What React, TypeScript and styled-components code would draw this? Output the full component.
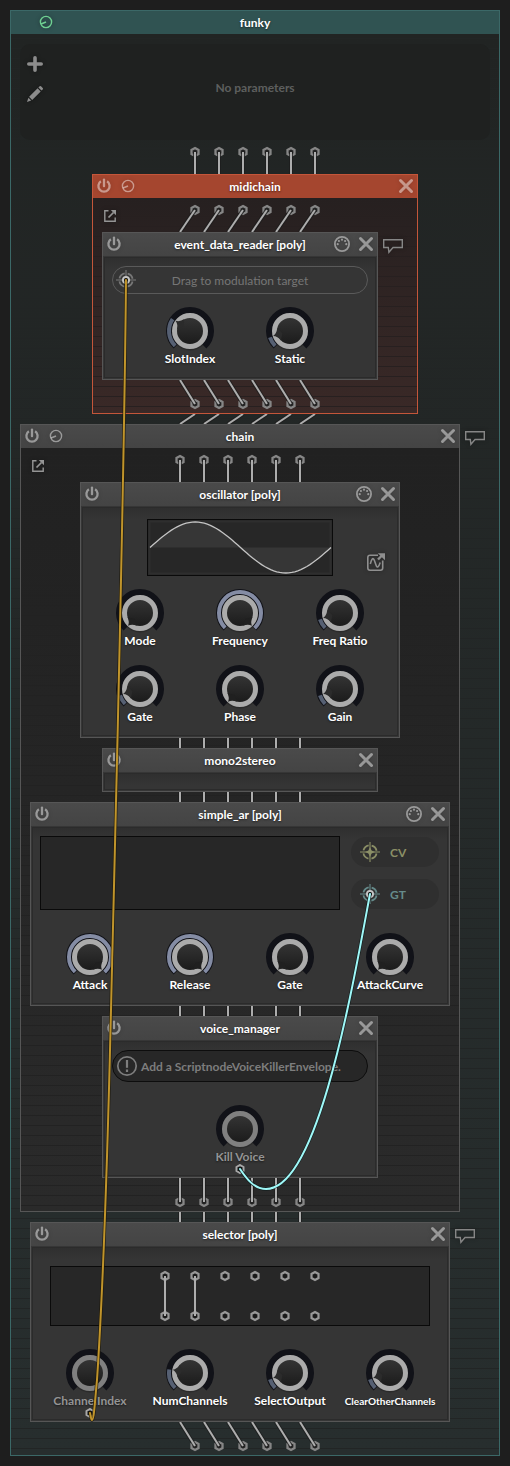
import React, { useId, useState } from "react";
import styled, { createGlobalStyle, css } from "styled-components";

const GlobalStyle = createGlobalStyle`
  *, *::before, *::after { box-sizing: border-box; }
  body {
    margin: 0;
    background: #1e1e1e;
    color: #fff;
    font: 700 12px/16px Lato, "Liberation Sans", sans-serif;
  }
  svg { display: block; flex: none; }
`;

/* ---------- themes ---------- */

type Tone = "root" | "midi" | "plain";

const tones: Record<Tone, { border: string; header: string; from: string; to: string; stripe: string; offset: number }> = {
  root: { border: "#3b6867", header: "#305352", from: "#212423", to: "#272e2e", stripe: "#222525", offset: 5 },
  midi: { border: "#c4563a", header: "#a5462f", from: "#262020", to: "#3a2927", stripe: "#272020", offset: 9 },
  plain: { border: "#565656", header: "linear-gradient(#4a4a4a, #444)", from: "#212121", to: "#2a2a2a", stripe: "#222222", offset: 8 },
};

/* ---------- layout parts ---------- */

const Page = styled.main`
  padding: 10px;
`;

const Frame = styled.section<{ $tone: Tone; $width?: number; $fill?: boolean }>`
  position: relative;
  border: 1px solid ${(p) => tones[p.$tone].border};
  width: ${(p) => (p.$fill ? "auto" : p.$width ? `${p.$width}px` : "fit-content")};
`;

const Header = styled.header<{ $tone: Tone }>`
  display: grid;
  grid-template-columns: 1fr auto 1fr;
  height: 23px;
  background: ${(p) => tones[p.$tone].header};
`;

const HeaderSide = styled.div<{ $end?: boolean }>`
  display: flex;
  gap: 2px;
  justify-content: ${(p) => (p.$end ? "flex-end" : "flex-start")};
`;

const Title = styled.h2`
  margin: 0;
  font-size: 12px;
  line-height: 24px;
  font-weight: 700;
  white-space: nowrap;
  text-shadow: 0 1px 2px rgba(0, 0, 0, 0.5);
`;

const IconButton = styled.button<{ $tint?: string }>`
  display: grid;
  place-items: center;
  width: 22px;
  height: 22px;
  padding: 0;
  border: 0;
  background: none;
  color: ${(p) => p.$tint ?? "rgba(255, 255, 255, 0.46)"};
  cursor: pointer;
  filter: drop-shadow(0 0 2px rgba(0, 0, 0, 0.35));
`;

const Slot = styled.span`
  width: 22px;
`;

const ContainerBody = styled.div<{ $tone: Tone }>`
  display: flex;
  flex-direction: column;
  align-items: center;
  padding: 0 9px;
  background:
    repeating-linear-gradient(
      transparent 0 ${(p) => tones[p.$tone].offset - 1}px,
      ${(p) => tones[p.$tone].stripe} ${(p) => tones[p.$tone].offset - 1}px ${(p) => tones[p.$tone].offset}px,
      transparent ${(p) => tones[p.$tone].offset}px 10px
    ),
    linear-gradient(${(p) => tones[p.$tone].from}, ${(p) => tones[p.$tone].to});
`;

const LeafBody = styled.div<{ $bare?: boolean }>`
  padding: ${(p) => (p.$bare ? "19px 0 0" : "10px 9px 12px")};
  background: linear-gradient(#2e2e2e, #353535 14px);
  box-shadow: inset 0 0 0 1px #363636, inset 0 0 0 2px #2b2b2b;
`;

const InletRow = styled.div`
  display: grid;
  grid-template-columns: 1fr auto 1fr;
  align-self: stretch;
`;

const InletTool = styled.div`
  padding: 7px 0 0;
  margin-left: -3px;
`;

const NodeRow = styled.div`
  display: flex;
  align-items: flex-start;
`;

const CommentSlot = styled.div`
  width: 30px;
  padding: 3px 0 0 4px;
`;

const ParameterPanel = styled.div`
  display: grid;
  grid-template-columns: 30px 1fr 30px;
  align-self: stretch;
  height: 96px;
  margin-top: 10px;
  border-radius: 10px;
  background: #1f2120;
`;

const PanelTools = styled.div`
  display: flex;
  flex-direction: column;
  align-items: center;
  gap: 8px;
  padding-top: 9px;
`;

const PanelHint = styled.p`
  margin: 0;
  padding-bottom: 8px;
  align-self: center;
  text-align: center;
  color: #5d5f5e;
`;

const Pill = styled.div<{ $dark?: boolean }>`
  display: grid;
  grid-template-columns: ${(p) => (p.$dark ? "28px 1fr 0" : "26px 1fr 26px")};
  align-items: center;
  height: ${(p) => (p.$dark ? 32 : 28)}px;
  border-radius: 16px;
  border: 1px solid ${(p) => (p.$dark ? "#0d0d0d" : "#5a5a5a")};
  background: ${(p) => (p.$dark ? "#272727" : "transparent")};
  color: ${(p) => (p.$dark ? "#7d7d7d" : "#767676")};
  font-weight: ${(p) => (p.$dark ? 700 : 400)};
  text-align: ${(p) => (p.$dark ? "left" : "center")};
  white-space: nowrap;
`;

const PillIcon = styled.span`
  display: grid;
  place-items: center;
  height: 26px;
`;

const Caption = styled.span`
  padding-top: 2px;
`;

const KnobRow = styled.div<{ $gap: number }>`
  display: flex;
  justify-content: center;
  margin-top: ${(p) => p.$gap}px;
`;

const KnobCell = styled.label<{ $off?: boolean; $small?: boolean }>`
  position: relative;
  display: flex;
  flex-direction: column;
  align-items: center;
  width: 100px;
  height: 60px;
  color: ${(p) => (p.$off ? "#949494" : "#fff")};
  font-size: ${(p) => (p.$small ? 10 : 12)}px;
`;

const KnobName = styled.span`
  margin: -4px 0 -1px;
  line-height: 16px;
  white-space: nowrap;
  text-shadow: 0 1px 2px rgba(0, 0, 0, 0.5);
`;

const KnobInput = styled.input`
  position: absolute;
  top: 0;
  left: 26px;
  width: 48px;
  height: 48px;
  margin: 0;
  opacity: 0;
  cursor: pointer;
`;

const Screen = styled.div<{ $height: number; $width?: number }>`
  display: grid;
  place-items: center;
  height: ${(p) => p.$height}px;
  ${(p) => p.$width && css`width: ${p.$width}px;`}
  border: 1px solid #0a0a0a;
  background: #272727;
`;

const OscillatorTop = styled.div`
  display: grid;
  grid-template-columns: 1fr auto 1fr;
  padding-top: 3px;
`;

const ScopeTool = styled.div`
  display: grid;
  place-items: end center;
  padding: 0 0 3px 28px;
`;

const EnvelopeTop = styled.div`
  display: grid;
  grid-template-columns: 1fr 88px;
  gap: 11px;
  padding-right: 1px;
`;

const Outputs = styled.div`
  display: flex;
  flex-direction: column;
  gap: 12px;
  padding-top: 1px;
`;

const Output = styled.div<{ $tint: string }>`
  display: flex;
  align-items: center;
  gap: 10px;
  height: 30px;
  padding-left: 9px;
  border-radius: 15px;
  background: #2f2f2f;
  color: ${(p) => p.$tint};
`;

const SelectorTop = styled.div`
  padding: 10px 10px 0;
`;

const CableLayer = styled.svg`
  position: absolute;
  top: -1px;
  left: 0;
  right: 0;
  margin: 0 auto;
  pointer-events: none;
`;

/* ---------- icons ---------- */

const PowerIcon = () => (
  <svg width="16" height="16" viewBox="-8 -8 16 16" fill="none" stroke="currentColor" strokeWidth="2.3">
    <path d="M-3.1 -4.7A5.6 5.6 0 1 0 3.1 -4.7" />
    <path d="M0 -6.4V0.2" strokeLinecap="round" />
  </svg>
);

const GaugeIcon = () => (
  <svg width="16" height="16" viewBox="-8 -8 16 16" fill="none" stroke="currentColor" strokeWidth="1.4">
    <circle r="5.6" />
    <path d="M-5 2L0 0" strokeWidth="1.8" />
  </svg>
);

const CloseIcon = () => (
  <svg width="16" height="16" viewBox="-8 -8 16 16" stroke="currentColor" strokeWidth="3" strokeLinecap="round">
    <path d="M-5.5 -5.5L5.5 5.5M5.5 -5.5L-5.5 5.5" />
  </svg>
);

const MidiIcon = () => (
  <svg width="18" height="18" viewBox="-9 -9 18 18" fill="currentColor">
    <circle r="7.1" fill="none" stroke="currentColor" strokeWidth="1.8" />
    <circle cx="-4.3" cy="0.2" r="1.1" />
    <circle cx="-3.1" cy="-3" r="1.1" />
    <circle cx="0" cy="-4.3" r="1.1" />
    <circle cx="3.1" cy="-3" r="1.1" />
    <circle cx="4.3" cy="0.2" r="1.1" />
  </svg>
);

const CommentIcon = () => (
  <svg width="22" height="17" viewBox="0 0 22 17" fill="none" stroke="currentColor" strokeWidth="1.4">
    <path d="M1.7 1.7H20.3V9.5H11L6.9 14.3L6.3 9.5H1.7Z" />
  </svg>
);

const OpenIcon = () => (
  <svg width="14" height="14" viewBox="0 0 14 14" fill="none" stroke="currentColor" strokeWidth="1.4">
    <path d="M5.5 1.8H1.8V12.2H12.2V8.5" />
    <path d="M5.5 8.5L10.5 3.5" strokeWidth="1.7" />
    <path d="M7.8 1H13V6.2Z" fill="currentColor" stroke="none" />
  </svg>
);

const PlusIcon = () => (
  <svg width="18" height="18" viewBox="-9 -9 18 18" stroke="currentColor" strokeWidth="3.6" strokeLinecap="round">
    <path d="M0 -6.2V6.2M-6.2 0H6.2" />
  </svg>
);

const PencilIcon = () => (
  <svg width="18" height="18" viewBox="0 0 18 18" fill="currentColor">
    <path d="M1 17L2.4 12.8L5.2 15.6Z" />
    <path d="M3.1 11.8L11.6 3.3L14.7 6.4L6.2 14.9Z" />
    <path d="M12.4 2.5L13.6 1.3Q14.3 0.7 15 1.3L16.7 3Q17.3 3.7 16.7 4.4L15.5 5.6Z" />
  </svg>
);

const ScopeIcon = () => (
  <svg width="20" height="20" viewBox="0 0 20 20" fill="none" stroke="currentColor" strokeWidth="1.6">
    <path d="M12 3.2H4Q1.8 3.2 1.8 5.4V16Q1.8 18.2 4 18.2H14.5Q16.7 18.2 16.7 16V8.5" />
    <path d="M4.3 12Q6.4 3.5 8.4 8.5L10 13Q11.8 18 14.2 10.5" />
    <path d="M12 7.5L16 3.5" strokeWidth="2.4" />
    <path d="M11.8 1.2H19V8.2Z" fill="currentColor" stroke="none" />
  </svg>
);

const WarningIcon = () => (
  <svg width="22" height="22" viewBox="-11 -11 22 22" fill="none" stroke="currentColor" strokeWidth="1.7">
    <circle r="9.2" />
    <path d="M0 -6V1.8" strokeWidth="2.2" />
    <path d="M0 3.5V6" strokeWidth="2.2" />
  </svg>
);

const hexagon = "0,-4 3.5,-2 3.5,2 0,4 -3.5,2 -3.5,-2";

const TargetIcon = ({ color, linked }: { color: string; linked?: boolean }) => (
  <svg width="20" height="20" viewBox="-10 -10 20 20" fill="none" stroke={color}>
    <circle r="6.7" strokeWidth="1.8" strokeDasharray="7.5 3.02" strokeDashoffset="-1.5" />
    <path d="M0 -10V10M-10 0H10" strokeWidth="1.6" opacity="0.7" />
    <path d="M0 -5L1.6 -1.6L5 0L1.6 1.6L0 5L-1.6 1.6L-5 0L-1.6 -1.6Z" fill={color} stroke="none" />
    {linked && <circle r="3" fill="#0b0b0b" stroke="#c4c4c4" strokeWidth="2" />}
  </svg>
);

const PortIcon = () => (
  <svg width="10" height="10" viewBox="-5 -5 10 10">
    <polygon points={hexagon} fill="#111" stroke="#a8a8a8" strokeWidth="2" />
  </svg>
);

/* ---------- wires ---------- */

const channels = [-60, -36, -12, 12, 36, 60];

interface WiresProps {
  height: number;
  top?: number;
  bottom?: number;
  port?: "in" | "out";
}

/* Six signal lines between two nodes; `top` and `bottom` shift their ends sideways. */
const Wires = ({ height, top = 0, bottom = 0, port }: WiresProps) => {
  const y1 = port === "in" ? 12 : 0;
  const y2 = port === "out" ? 24 : height;
  const portX = port === "in" ? top : bottom;
  const portY = port === "in" ? y1 : y2;
  return (
    <svg width="164" height={height} viewBox={`-82 0 164 ${height}`} aria-hidden>
      {channels.map((x) => (
        <g key={x}>
          {port && (
            <polygon points={hexagon} transform={`translate(${x + portX} ${portY})`} fill="#222" stroke="#868686" strokeWidth="2.3" />
          )}
          <path d={`M${x + top} ${y1}L${x + bottom} ${y2}`} stroke="#1c1c1c" strokeWidth="4" opacity="0.75" />
          <path d={`M${x + top} ${y1}L${x + bottom} ${y2}`} stroke="#adadad" strokeWidth="2" />
        </g>
      ))}
    </svg>
  );
};

/* ---------- knob ---------- */

const START = -137;
const SWEEP = 274;

const point = (angle: number, radius: number) => {
  const a = (angle * Math.PI) / 180;
  return `${(Math.sin(a) * radius).toFixed(2)} ${(-Math.cos(a) * radius).toFixed(2)}`;
};

const arc = (from: number, to: number, radius: number) =>
  `M${point(from, radius)}A${radius} ${radius} 0 ${to - from > 180 ? 1 : 0} 1 ${point(to, radius)}`;

interface KnobProps {
  name: string;
  value?: number;
  off?: boolean;
  small?: boolean;
}

const Knob = ({ name, value = 0, off, small }: KnobProps) => {
  const [level, setLevel] = useState(value);
  const fill = useId();
  const angle = START + SWEEP * level;
  return (
    <KnobCell $off={off} $small={small}>
      <svg width="48" height="48" viewBox="-24 -24 48 48" fill="none" aria-hidden>
        <defs>
          <linearGradient id={fill} x1="0" y1="0" x2="0" y2="1">
            <stop offset="0" stopColor="#363636" />
            <stop offset="1" stopColor="#191919" />
          </linearGradient>
        </defs>
        <circle r="19.5" fill="#2b2b2b" />
        <path d={arc(START, START + SWEEP, 21)} stroke="#111218" strokeWidth="6" />
        {!off && level > 0 && (
          <path d={arc(START + 2, angle - 1, 21)} stroke={level > 0.5 ? "#848ca4" : "#566073"} strokeWidth="4" />
        )}
        <circle r="15.5" fill={`url(#${fill})`} stroke={off ? "#808080" : "#ababab"} strokeWidth="5" />
        {!off && (
          <path
            d="M0 -17.6Q-1.5 -13.4 -6.5 -11.4L0 -8L6.5 -11.4Q1.5 -13.4 0 -17.6Z"
            transform={`rotate(${angle})`}
            fill={level > 0 && level < 0.5 ? "#2b2b2b" : "#202020"}
          />
        )}
      </svg>
      <KnobName>{name}</KnobName>
      {off && <PortIcon />}
      <KnobInput
        type="range"
        min={0}
        max={1}
        step={0.01}
        value={level}
        disabled={off}
        onChange={(e) => setLevel(Number(e.target.value))}
      />
    </KnobCell>
  );
};

/* ---------- nodes ---------- */

interface NodeProps {
  title: string;
  tone?: Tone;
  width?: number;
  fill?: boolean;
  power?: boolean;
  gauge?: boolean;
  midi?: boolean;
  close?: boolean;
  children?: React.ReactNode;
}

const Node = ({ title, tone = "plain", width, fill, power = true, gauge, midi, close = true, children }: NodeProps) => (
  <Frame $tone={tone} $width={width} $fill={fill} aria-label={title}>
    <Header $tone={tone}>
      <HeaderSide>
        {power ? (
          <IconButton type="button" aria-label="Bypass"><PowerIcon /></IconButton>
        ) : (
          <Slot />
        )}
        {gauge && (
          <IconButton type="button" aria-label="Profile" $tint={tone === "root" ? "#6fd092" : undefined}>
            <GaugeIcon />
          </IconButton>
        )}
      </HeaderSide>
      <Title>{title}</Title>
      <HeaderSide $end>
        {midi && <IconButton type="button" aria-label="MIDI"><MidiIcon /></IconButton>}
        {close && <IconButton type="button" aria-label="Remove"><CloseIcon /></IconButton>}
      </HeaderSide>
    </Header>
    {children}
  </Frame>
);

const Comment = () => (
  <CommentSlot>
    <IconButton type="button" aria-label="Comment" $tint="#868686"><CommentIcon /></IconButton>
  </CommentSlot>
);

const Inlet = ({ bottom }: { bottom?: number }) => (
  <InletRow>
    <InletTool>
      <IconButton type="button" aria-label="Open" $tint="#959595"><OpenIcon /></IconButton>
    </InletTool>
    <Wires height={34} bottom={bottom} port="in" />
  </InletRow>
);

const sine = Array.from({ length: 61 }, (_, i) => {
  const x = 2 + (i * 181) / 60;
  const y = 27.5 - Math.sin((i / 60) * Math.PI * 2) * 25.5;
  return `${i ? "L" : "M"}${x.toFixed(1)} ${y.toFixed(1)}`;
}).join("");

const Oscillator = () => (
  <Node title="oscillator [poly]" width={320} midi>
    <LeafBody>
      <OscillatorTop>
        <span />
        <Screen $height={57} $width={186}>
          <svg width="184" height="55" viewBox="0 0 184 55" aria-label="Waveform">
            <rect x="1.5" y="1.5" width="181" height="52" fill="none" stroke="#2e2e2e" strokeWidth="2" />
            <path d={`${sine}Z`} fill="#363636" />
            <path d={sine} fill="none" stroke="#c4c4c4" strokeWidth="1.3" />
          </svg>
        </Screen>
        <ScopeTool>
          <IconButton type="button" aria-label="Edit waveform" $tint="#8f8f8f"><ScopeIcon /></IconButton>
        </ScopeTool>
      </OscillatorTop>
      <KnobRow $gap={13}>
        <Knob name="Mode" />
        <Knob name="Frequency" value={1} />
        <Knob name="Freq Ratio" value={0.11} />
      </KnobRow>
      <KnobRow $gap={16}>
        <Knob name="Gate" value={0.11} />
        <Knob name="Phase" />
        <Knob name="Gain" value={0.11} />
      </KnobRow>
    </LeafBody>
  </Node>
);

const EventDataReader = () => (
  <Node title="event_data_reader [poly]" width={276} midi>
    <LeafBody>
      <Pill>
        <PillIcon><TargetIcon color="#777777" linked /></PillIcon>
        <Caption>Drag to modulation target</Caption>
      </Pill>
      <KnobRow $gap={13}>
        <Knob name="SlotIndex" value={0.3} />
        <Knob name="Static" value={0.11} />
      </KnobRow>
    </LeafBody>
  </Node>
);

const SimpleAr = () => (
  <Node title="simple_ar [poly]" width={420} midi>
    <LeafBody>
      <EnvelopeTop>
        <Screen $height={74} />
        <Outputs>
          <Output $tint="#8b8f66">
            <TargetIcon color="#8b8f66" />
            <Caption>CV</Caption>
          </Output>
          <Output $tint="#668b8b">
            <TargetIcon color="#668b8b" linked />
            <Caption>GT</Caption>
          </Output>
        </Outputs>
      </EnvelopeTop>
      <KnobRow $gap={23}>
        <Knob name="Attack" value={1} />
        <Knob name="Release" value={1} />
        <Knob name="Gate" />
        <Knob name="AttackCurve" />
      </KnobRow>
    </LeafBody>
  </Node>
);

const VoiceManager = () => (
  <Node title="voice_manager" width={276}>
    <LeafBody>
      <Pill $dark>
        <PillIcon><WarningIcon /></PillIcon>
        <Caption>Add a ScriptnodeVoiceKillerEnvelope.</Caption>
      </Pill>
      <KnobRow $gap={23}>
        <Knob name="Kill Voice" off />
      </KnobRow>
    </LeafBody>
  </Node>
);

const Selector = () => (
  <Node title="selector [poly]" width={420}>
    <LeafBody>
      <SelectorTop>
        <Screen $height={60}>
          <svg width="164" height="58" viewBox="-82 -29 164 58" aria-label="Channel routing">
            {[-75, -45, -15, 15, 45, 75].map((x, i) => (
              <g key={x}>
                <polygon points={hexagon} transform={`translate(${x} -20)`} fill="#181818" stroke="#989898" strokeWidth="2.2" />
                <polygon points={hexagon} transform={`translate(${x} 20)`} fill="#181818" stroke="#989898" strokeWidth="2.2" />
                {i < 2 && <path d={`M${x} -20V20`} stroke="#adadad" strokeWidth="2" />}
              </g>
            ))}
          </svg>
        </Screen>
      </SelectorTop>
      <KnobRow $gap={23}>
        <Knob name="ChannelIndex" off />
        <Knob name="NumChannels" value={0.21} />
        <Knob name="SelectOutput" value={0.11} />
        <Knob name="ClearOtherChannels" value={0.11} small />
      </KnobRow>
    </LeafBody>
  </Node>
);

const yellowCable =
  "M126 280C124 500 116 800 111 1010C107 1180 101 1320 97 1380C95 1400 94 1420 92 1420C91 1420 91 1417 90 1413";
const cyanCable = "M370 894C352 990 318 1189 266 1189C254 1189 246 1178 240 1169";

const Cables = () => (
  <CableLayer width="488" height="1446" viewBox="11 10 488 1446" fill="none" strokeLinecap="round" aria-hidden>
    <path d={yellowCable} stroke="#1c1608" strokeWidth="3.4" opacity="0.8" />
    <path d={yellowCable} stroke="#c0942b" strokeWidth="2" />
    <path d={cyanCable} stroke="#0c1a1a" strokeWidth="3.4" opacity="0.8" />
    <path d={cyanCable} stroke="#9ff8f8" strokeWidth="2" />
  </CableLayer>
);

export default function App() {
  return (
    <Page>
      <GlobalStyle />
      <Node title="funky" tone="root" fill power={false} gauge close={false}>
        <ContainerBody $tone="root">
          <ParameterPanel>
            <PanelTools>
              <IconButton type="button" aria-label="Add parameter" $tint="#8c8c8c"><PlusIcon /></IconButton>
              <IconButton type="button" aria-label="Edit parameters" $tint="#8c8c8c"><PencilIcon /></IconButton>
            </PanelTools>
            <PanelHint>No parameters</PanelHint>
          </ParameterPanel>
          <Wires height={34} port="in" />

          <Node title="midichain" tone="midi" gauge>
            <ContainerBody $tone="midi">
              <Inlet bottom={-15} />
              <NodeRow>
                <EventDataReader />
                <Comment />
              </NodeRow>
              <Wires height={33} top={-15} port="out" />
            </ContainerBody>
          </Node>
          <Wires height={10} bottom={-15} />

          <NodeRow>
            <Node title="chain" gauge>
              <ContainerBody $tone="plain">
                <Inlet />
                <Oscillator />
                <Wires height={10} />
                <Node title="mono2stereo" width={276}>
                  <LeafBody $bare />
                </Node>
                <Wires height={10} />
                <SimpleAr />
                <Wires height={10} />
                <VoiceManager />
                <Wires height={33} port="out" />
              </ContainerBody>
            </Node>
            <Comment />
          </NodeRow>
          <Wires height={10} top={-15} bottom={-15} />

          <NodeRow>
            <Selector />
            <Comment />
          </NodeRow>
          <Wires height={33} top={-15} port="out" />
        </ContainerBody>
        <Cables />
      </Node>
    </Page>
  );
}
